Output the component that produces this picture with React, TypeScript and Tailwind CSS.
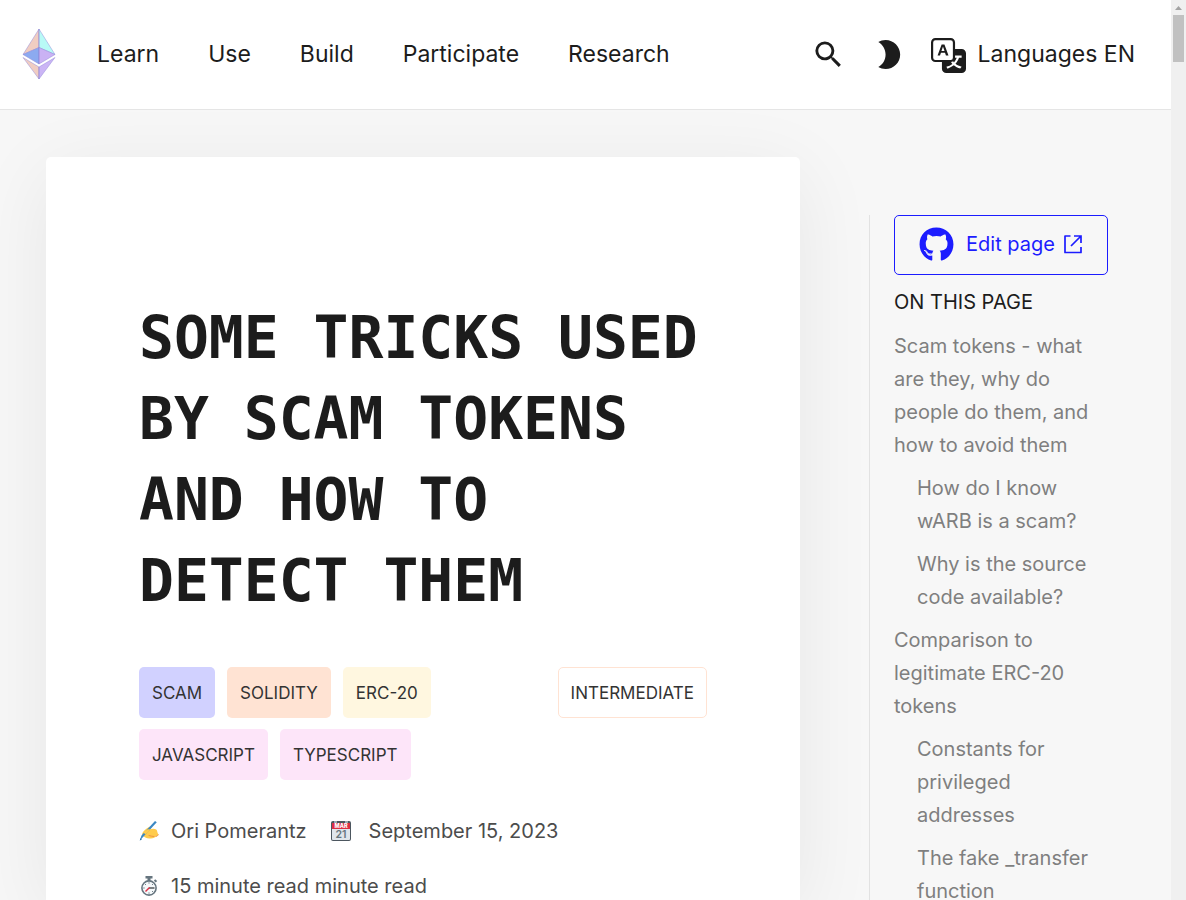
import React from "react";
import { MdSearch, MdBrightness2 } from "react-icons/md";
import { BsTranslate } from "react-icons/bs";
import { FaGithub } from "react-icons/fa";

const navItems = ["Learn", "Use", "Build", "Participate", "Research"];

const tags = [
  { label: "scam", tone: "bg-[#d1d1ff]" },
  { label: "solidity", tone: "bg-[#ffe3d3]" },
  { label: "erc-20", tone: "bg-[#fff7e0]" },
  { label: "javascript", tone: "bg-[#fde5f9]" },
  { label: "typescript", tone: "bg-[#fde5f9]" },
];

const contents = [
  {
    title: "Scam tokens - what are they, why do people do them, and how to avoid them",
    children: ["How do I know wARB is a scam?", "Why is the source code available?"],
  },
  {
    title: "Comparison to legitimate ERC-20 tokens",
    children: ["Constants for privileged addresses", "The fake _transfer function"],
  },
];

function EthLogo() {
  return (
    <svg viewBox="0 0 34 52" className="h-[52px] w-[34px]" aria-hidden="true">
      <g stroke="#8f87da" strokeOpacity=".6" strokeWidth=".8" strokeLinejoin="round">
        <path d="M17 1 1 26.500 17 19.500Z" fill="#f0cdc2" />
        <path d="M17 1v18.500l16 7Z" fill="#b8faf6" />
        <path d="M1 26.500 17 19.500V36Z" fill="#8caaf0" />
        <path d="M33 26.500 17 19.500V36Z" fill="#cab2f4" />
        <path d="M1 29.500 17 39v12Z" fill="#f0cdc2" />
        <path d="M33 29.500 17 39v12Z" fill="#cbb5f5" />
      </g>
      <path d="M17 1v35M17 39v12" stroke="#8a7fd4" strokeOpacity=".4" />
    </svg>
  );
}

function ExternalLink() {
  return (
    <svg viewBox="0 0 20 20" className="ml-2 size-5" fill="none" stroke="currentColor" strokeWidth="1.700" aria-hidden="true">
      <path d="M7.500 2H2v16.500h16V13" strokeLinejoin="round" />
      <path d="M11 2h7v7M18 2 8 12" />
    </svg>
  );
}

function WritingHand() {
  return (
    <svg viewBox="0 0 20 20" className="size-5 shrink-0" aria-hidden="true">
      <path d="M4 11c2-2.500 4.500-4.600 7-5.500 1.800-.5 2.200 1 .8 2l-1 .8c2.700-.9 5-.9 6.400.3 1.200 1.100.8 2.200 1.700 3.900.7 1.400-.6 3-2.400 3.200-1.600 1.800-4 1.800-6.200 1.800-2.800 0-4.300-1-6-2.200-1.600-1.200-1.500-2.800-.3-4.300Z" fill="#ffcb4c" />
      <path d="M10 14.500c1.500.2 3 1.100 5 1.100M17 15.500c1-.3 2-.8 2.300-1.800" fill="none" stroke="#ee9547" strokeWidth="1" strokeLinecap="round" />
      <path d="M16 0 17.800 1.300 5 15 .8 19.500l1.700-5Z" fill="#3b88c3" />
      <path d="m4.500 11.300 3.700-2.800L11 8l-1.800 3-3 2.500Z" fill="#ffcb4c" />
      <path d="m.8 19.500.8-2.300 1.400 1Z" fill="#226699" />
    </svg>
  );
}

function Calendar() {
  return (
    <svg viewBox="0 0 20 20" className="size-5 shrink-0" aria-hidden="true">
      <rect width="20" height="20" rx="2" fill="#4c565f" />
      <path d="M1 6.500h18V18a1 1 0 0 1-1 1H2a1 1 0 0 1-1-1Z" fill="#dfe5eb" />
      <path d="M1 2h18v6H1Z" fill="#dd2e44" />
      <path d="M3 0h3v2H3zM14 0h3v2h-3z" fill="#99a9b5" />
      <text x="10" y="7" textAnchor="middle" fontSize="5.500" fontWeight="800" fill="#fff">MAR</text>
      <text x="10" y="17.300" textAnchor="middle" fontSize="10.500" fontWeight="600" fill="#66757f">21</text>
    </svg>
  );
}

function Stopwatch() {
  return (
    <svg viewBox="0 0 20 20" className="size-5 shrink-0" aria-hidden="true">
      <path d="M6.500 0h7v2.500h-7zM8.500 2h3v3h-3z" fill="#66757f" />
      <path d="m15.500 4 2 1.800" stroke="#66757f" strokeWidth="2" />
      <circle cx="10" cy="12" r="7.100" fill="#f5f8fa" stroke="#66757f" strokeWidth="1.600" />
      <path d="M10 6.300v1.300M10 16.400v1.300M4.300 12h1.300M6 8l.9.900M14 8l-.9.900M14 16l-.9-.9" stroke="#66757f" strokeWidth="1" />
      <path d="M10 12h5.500" stroke="#292f33" strokeWidth="1.200" />
      <path d="m10.500 11.500-4 4" stroke="#dd2e44" strokeWidth="1.400" />
    </svg>
  );
}

function Header() {
  return (
    <header className="flex h-[110px] shrink-0 items-center justify-between border-b border-[#e5e5e5] bg-white pr-9 pl-[22px] pb-[2px] text-[23px] leading-8 text-[#1c1c1c]">
      <div className="flex items-center gap-[41px]">
        <a href="#" aria-label="Home">
          <EthLogo />
        </a>
        <nav className="flex items-center gap-[49px]">
          {navItems.map((item) => (
            <button key={item} type="button">
              {item}
            </button>
          ))}
        </nav>
      </div>
      <div className="flex items-center">
        <div className="mr-[25px] flex gap-[25px] pt-[2px]">
          <button type="button" aria-label="Search">
            <MdSearch className="size-[35px]" />
          </button>
          <button type="button" aria-label="Toggle dark mode">
            <MdBrightness2 className="size-[35px]" />
          </button>
        </div>
        <button type="button" className="flex items-center gap-3">
          <BsTranslate className="mt-[3px] size-[35px]" />
          <span>Languages EN</span>
        </button>
      </div>
    </header>
  );
}

function Article() {
  return (
    <article className="min-w-0 flex-1 rounded-t-[5px] bg-white px-[93px] pt-[141px] shadow-[0_16px_80px_rgba(0,0,0,0.07)]">
      <h1 className="font-['DejaVu_Sans_Mono',monospace] text-[58px] leading-[81px] font-bold uppercase">
        Some tricks used by scam tokens and how to detect them
      </h1>
      <div className="mt-[45px] flex items-start justify-between text-[17px] leading-[27px] text-[#333] uppercase">
        <ul className="flex max-w-[300px] flex-wrap gap-x-3 gap-y-[11px]">
          {tags.map((tag) => (
            <li key={tag.label} className={`rounded-[5px] px-[13px] pt-[13px] pb-[11px] ${tag.tone}`}>
              {tag.label}
            </li>
          ))}
        </ul>
        <div className="rounded-[5px] border border-[#ffe3d3] px-3 pt-3 pb-[10px]">Intermediate</div>
      </div>
      <div className="mt-[35px] flex flex-wrap gap-x-6 gap-y-[23px] text-[20px] leading-8 text-[#4c4c4c]">
        <span className="flex items-center gap-3">
          <WritingHand />
          Ori Pomerantz
        </span>
        <span className="flex items-center gap-[18px]">
          <Calendar />
          September 15, 2023
        </span>
        <span className="flex items-center gap-3">
          <Stopwatch />
          15 minute read minute read
        </span>
      </div>
    </article>
  );
}

function TableOfContents() {
  return (
    <aside className="mt-[58px] w-[239px] shrink-0 border-l border-[#e2e2e2] pl-6 text-[20px] leading-[33px]">
      <a href="#" className="flex h-[60px] items-center justify-center rounded-[5px] border border-[#1c1cff] pb-[2px] text-[#1c1cff]">
        <FaGithub className="mr-3 size-[35px]" />
        Edit page
        <ExternalLink />
      </a>
      <div className="mt-[11px] text-[#1c1c1c] uppercase">On this page</div>
      <ul className="mt-[11px] flex flex-col gap-[10px] text-[#7f7f7f]">
        {contents.map((section) => (
          <li key={section.title}>
            <a href="#">{section.title}</a>
            <ul className="mt-[10px] flex flex-col gap-[10px] pl-[23px]">
              {section.children.map((child) => (
                <li key={child}>
                  <a href="#">{child}</a>
                </li>
              ))}
            </ul>
          </li>
        ))}
      </ul>
    </aside>
  );
}

function ScrollTrack() {
  return (
    <div className="flex w-[15px] shrink-0 flex-col items-center bg-[#f0f0f0]" aria-hidden="true">
      <svg viewBox="0 0 15 15" className="size-[15px]">
        <path d="m4 10 3.500-4 3.500 4Z" fill="#a3a3a3" />
      </svg>
      <div className="h-[47px] w-[11px] bg-[#c1c1c1]" />
    </div>
  );
}

export default function App() {
  return (
    <div className="flex h-screen overflow-hidden bg-[#f7f7f7] font-[Inter,sans-serif] text-[#1c1c1c]">
      <div className="flex min-w-0 flex-1 flex-col">
        <Header />
        <main className="flex min-h-0 flex-1 gap-[69px] overflow-hidden pt-[47px] pr-[63px] pl-[46px]">
          <Article />
          <TableOfContents />
        </main>
      </div>
      <ScrollTrack />
    </div>
  );
}
